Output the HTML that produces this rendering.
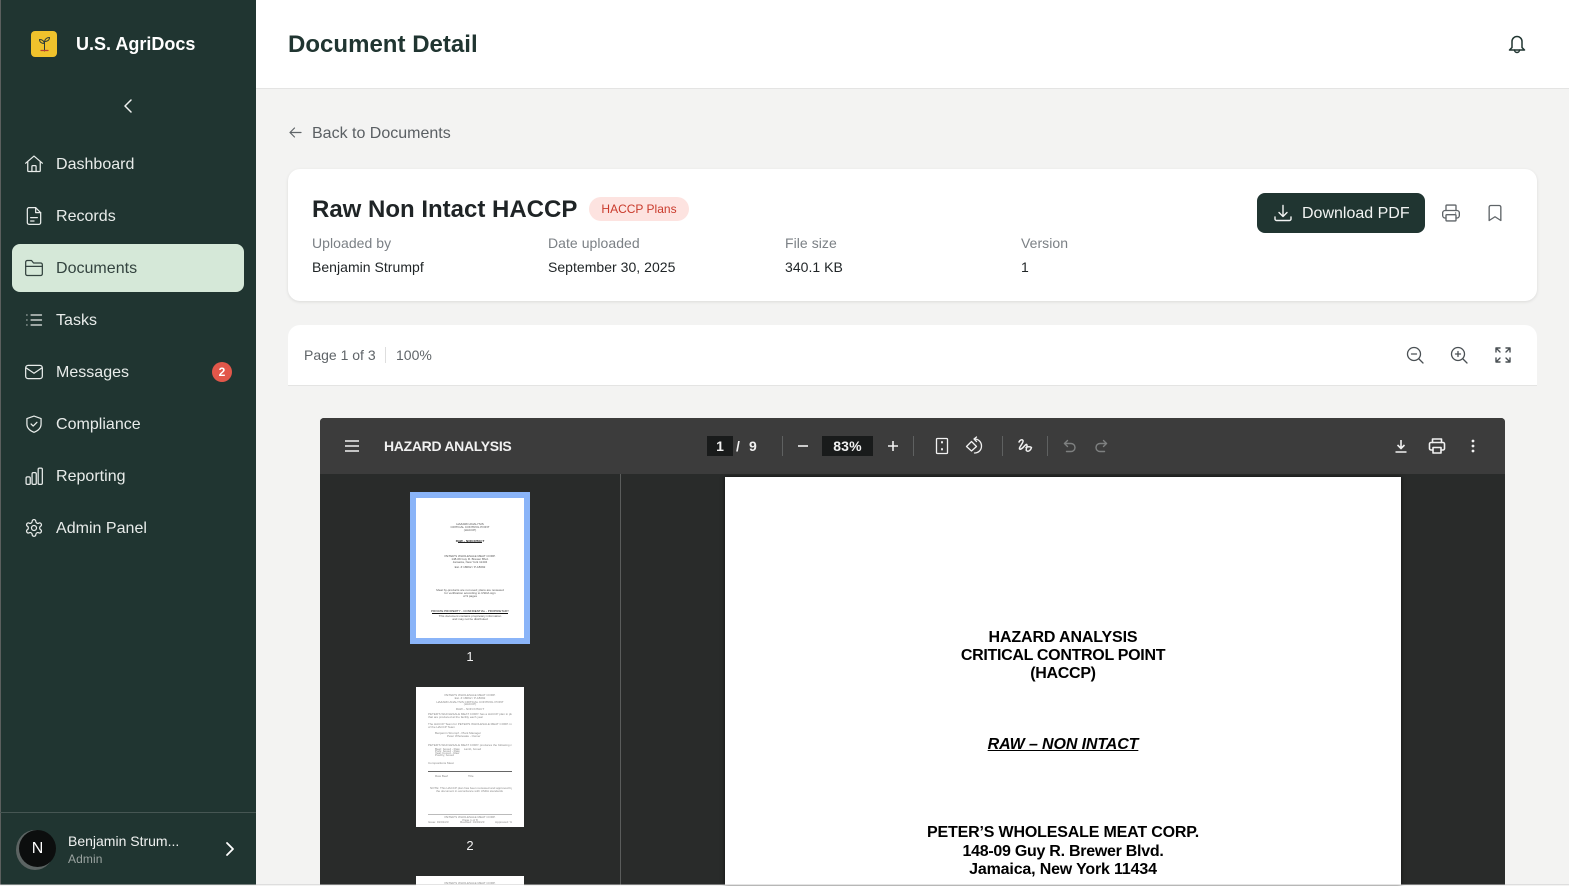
<!DOCTYPE html>
<html><head><meta charset="utf-8"><title>Document Detail</title>
<style>
*{box-sizing:border-box}
html,body{margin:0;padding:0;width:1569px;height:885px;overflow:hidden;background:#f3f3f2;font-family:"Liberation Sans",sans-serif}
.a{position:absolute;white-space:nowrap}
svg{position:absolute;fill:none;stroke-linecap:round;stroke-linejoin:round}
.nav{position:absolute;left:56px;font-size:16px;line-height:20px;color:#e8ecea;letter-spacing:.02px;white-space:nowrap}
.ic{stroke:#e8ecea;stroke-width:1.5}
.lab{font-size:14px;line-height:18px;color:#7b8085;letter-spacing:.05px}
.val{font-size:14px;line-height:18px;color:#1f2426;letter-spacing:.03px}
.pd{position:absolute;left:725px;width:676px;text-align:center;font-size:16px;line-height:18px;font-weight:bold;color:#000;white-space:nowrap}
.t{position:absolute;text-align:center;font-size:3px;line-height:3px;color:#555;white-space:nowrap;overflow:hidden}
.t2 .t{color:#8a8a8a}
.tb{stroke:#f1f1f1;stroke-width:1.6}
.sep{position:absolute;top:436px;width:1px;height:20px;background:#5f6161}
.w{position:absolute;left:0;width:0;height:0}
</style></head><body>

<div class="a" style="left:0;top:0;width:256px;height:885px;background:#203531"></div>
<div class="a" style="left:0;top:0;width:1px;height:885px;background:#5b5f5e"></div>
<div class="a" style="left:31px;top:31px;width:26px;height:26px;border-radius:4px;background:#f0c22c"></div>
<svg style="left:37px;top:35px" width="15" height="18" viewBox="0 0 15 18" stroke="#2a3a3a" stroke-width="1"><path d="M7.5 16V7"/><path d="M7.5 8.5C7 6 5.5 4.5 2.5 4.5 2.5 7 4.5 8.500 7.500 8.500z"/><path d="M7.500 6.500C8 4 10 2.500 12.500 2.500 12.500 5 10.500 6.500 7.500 6.500z"/><path d="M4 15.500h7" stroke="#b8402e" stroke-width="1.200"/></svg>
<div class="a" style="left:76px;top:33px;font-size:18px;line-height:22px;font-weight:bold;color:#fff">U.S. AgriDocs</div>
<svg style="left:118px;top:96px" width="20" height="20" viewBox="0 0 20 20" stroke="#f0f2f1" stroke-width="1.500"><path d="M13 4 7 10l6 6"/></svg>

<div class="a" style="left:12px;top:244px;width:232px;height:48px;border-radius:8px;background:#d5e8d8"></div>

<div class="nav" style="top:155px">Dashboard</div>
<div class="nav" style="top:207px">Records</div>
<div class="nav" style="top:259px;color:#33433f">Documents</div>
<div class="nav" style="top:311px">Tasks</div>
<div class="nav" style="top:363px">Messages</div>
<div class="nav" style="top:415px">Compliance</div>
<div class="nav" style="top:467px">Reporting</div>
<div class="nav" style="top:519px">Admin Panel</div>

<svg class="ic" style="left:24px;top:154px" width="20" height="20" viewBox="0 0 24 24"><path d="M2 11 12 2.500 22 11"/><path d="M4.500 9.500V20a1 1 0 0 0 1 1h13a1 1 0 0 0 1-1V9.500"/><path d="M9.500 21v-6a1 1 0 0 1 1-1h3a1 1 0 0 1 1 1v6"/></svg>
<svg class="ic" style="left:24px;top:206px" width="20" height="20" viewBox="0 0 24 24"><path d="M14 2H6a2 2 0 0 0-2 2v16a2 2 0 0 0 2 2h12a2 2 0 0 0 2-2V8z"/><path d="M14 2v6h6"/><path d="M8 14h8M8 18h4"/></svg>
<svg style="left:24px;top:258px;stroke:#33433f;stroke-width:1.500" width="20" height="20" viewBox="0 0 24 24"><path d="M2 7V5a2 2 0 0 1 2-2h5l2.500 3H20a2 2 0 0 1 2 2v11a2 2 0 0 1-2 2H4a2 2 0 0 1-2-2z"/><path d="M2 10h20"/></svg>
<svg class="ic" style="left:24px;top:310px" width="20" height="20" viewBox="0 0 24 24"><path d="M8.500 6H21M8.500 12H21M8.500 18H21M3.500 6h.01M3.500 12h.01M3.500 18h.01"/></svg>
<svg class="ic" style="left:24px;top:362px" width="20" height="20" viewBox="0 0 24 24"><rect x="2" y="4" width="20" height="16" rx="3"/><path d="m2.500 7 9.500 6.500L21.500 7"/></svg>
<svg class="ic" style="left:24px;top:414px" width="20" height="20" viewBox="0 0 24 24"><path d="M12 2.500 20.500 5.500V12c0 5-3.500 8-8.500 10-5-2-8.500-5-8.500-10V5.500z"/><path d="m8.500 12 2.500 2.500 4.500-4.500"/></svg>
<svg class="ic" style="left:24px;top:466px" width="20" height="20" viewBox="0 0 24 24"><rect x="2.500" y="13" width="5" height="9" rx="1.500"/><rect x="9.700" y="8" width="5" height="14" rx="1.500"/><rect x="17" y="2.500" width="5" height="19.500" rx="1.500"/></svg>
<svg class="ic" style="left:24px;top:518px" width="20" height="20" viewBox="0 0 24 24"><circle cx="12" cy="12" r="3"/><path d="M12.200 2h-.4a2 2 0 0 0-2 2v.2a2 2 0 0 1-1 1.700l-.4.300a2 2 0 0 1-2 0l-.2-.1a2 2 0 0 0-2.700.7l-.2.400a2 2 0 0 0 .7 2.700l.2.100a2 2 0 0 1 1 1.700v.5a2 2 0 0 1-1 1.700l-.2.100a2 2 0 0 0-.7 2.700l.2.400a2 2 0 0 0 2.700.7l.2-.1a2 2 0 0 1 2 0l.4.300a2 2 0 0 1 1 1.700v.2a2 2 0 0 0 2 2h.4a2 2 0 0 0 2-2v-.2a2 2 0 0 1 1-1.700l.4-.3a2 2 0 0 1 2 0l.2.100a2 2 0 0 0 2.700-.7l.2-.4a2 2 0 0 0-.7-2.700l-.2-.1a2 2 0 0 1-1-1.700v-.5a2 2 0 0 1 1-1.700l.2-.1a2 2 0 0 0 .7-2.700l-.2-.4a2 2 0 0 0-2.700-.7l-.2.100a2 2 0 0 1-2 0l-.4-.3a2 2 0 0 1-1-1.700V4a2 2 0 0 0-2-2z"/></svg>

<div class="a" style="left:212px;top:362px;width:20px;height:20px;border-radius:50%;background:#e2574a;color:#fff;font-size:12px;font-weight:bold;line-height:20px;text-align:center">2</div>

<div class="a" style="left:0;top:812px;width:256px;height:1px;background:#465653"></div>
<div class="a" style="left:16px;top:830px;width:38px;height:40px;border-radius:50%;background:#5c6463"></div>
<div class="a" style="left:19px;top:830px;width:37px;height:37px;border-radius:50%;background:#0c0e0e;color:#fff;font-size:16px;line-height:37px;text-align:center">N</div>
<div class="a" style="left:68px;top:832px;font-size:14px;line-height:18px;color:#f0f2f1">Benjamin Strum...</div>
<div class="a" style="left:68px;top:851px;font-size:12px;line-height:16px;color:#9aa3a0;letter-spacing:.1px">Admin</div>
<svg style="left:220px;top:839px" width="20" height="20" viewBox="0 0 20 20" stroke="#fff" stroke-width="1.800"><path d="m7 4 6 6-6 6"/></svg>

<div class="a" style="left:256px;top:0;width:1313px;height:89px;background:#fff;border-bottom:1px solid #e4e4e3"></div>
<div class="a" style="left:288px;top:30px;font-size:24px;line-height:30px;font-weight:bold;color:#203531;letter-spacing:.02px">Document Detail</div>
<svg style="left:1505px;top:32px" width="24" height="24" viewBox="0 0 24 24" stroke="#203531" stroke-width="1.500"><path d="M7 15.500V9.500a5 5 0 0 1 10 0V15.500l2.500 2.500H4.500z"/><path d="M9.500 18a2.500 2.500 0 0 0 5 0"/></svg>

<svg style="left:287px;top:124px" width="17" height="17" viewBox="0 0 17 17" stroke="#5f6468" stroke-width="1.200"><path d="M14 8.500H3M7.500 4 3 8.500 7.500 13"/></svg>
<div class="a" style="left:312px;top:124px;font-size:16px;line-height:20px;color:#5a5f63">Back to Documents</div>

<div class="a" style="left:288px;top:169px;width:1249px;height:132px;background:#fff;border-radius:12px;box-shadow:0 1px 3px rgba(0,0,0,.1)"></div>
<div class="a" style="left:312px;top:195px;font-size:24px;line-height:30px;font-weight:bold;color:#1f2426">Raw Non Intact HACCP</div>
<div class="a" style="left:589px;top:197px;width:100px;height:24px;border-radius:12px;background:#fde3e0;color:#c93a2b;font-size:12px;line-height:24px;text-align:center">HACCP Plans</div>

<div class="a lab" style="left:312px;top:234px">Uploaded by</div>
<div class="a lab" style="left:548px;top:234px">Date uploaded</div>
<div class="a lab" style="left:785px;top:234px">File size</div>
<div class="a lab" style="left:1021px;top:234px">Version</div>
<div class="a val" style="left:312px;top:258px">Benjamin Strumpf</div>
<div class="a val" style="left:548px;top:258px">September 30, 2025</div>
<div class="a val" style="left:785px;top:258px">340.1 KB</div>
<div class="a val" style="left:1021px;top:258px">1</div>

<div class="a" style="left:1257px;top:193px;width:168px;height:40px;border-radius:8px;background:#203531"></div>
<svg style="left:1273px;top:203px" width="20" height="20" viewBox="0 0 20 20" stroke="#f2f4f3" stroke-width="1.400"><path d="M10 2.500v10.500M6 9.500l4 4 4-4"/><path d="M2 14v2a1.500 1.500 0 0 0 1.500 1.500h13A1.500 1.500 0 0 0 18 16v-2"/></svg>
<div class="a" style="left:1302px;top:204px;font-size:16px;line-height:20px;color:#f2f4f3">Download PDF</div>
<svg style="left:1441px;top:203px" width="20" height="20" viewBox="0 0 24 24" stroke="#5f6468" stroke-width="1.600"><path d="M6 9V3.500a1 1 0 0 1 1-1h10a1 1 0 0 1 1 1V9"/><path d="M6 18H5a3 3 0 0 1-3-3v-3a3 3 0 0 1 3-3h14a3 3 0 0 1 3 3v3a3 3 0 0 1-3 3h-1"/><rect x="6" y="14" width="12" height="7.500" rx="1"/><path d="M17.500 12h.01"/></svg>
<svg style="left:1485px;top:203px" width="20" height="20" viewBox="0 0 24 24" stroke="#5f6468" stroke-width="1.600"><path d="M19 21l-7-4.500L5 21V5a2 2 0 0 1 2-2h10a2 2 0 0 1 2 2z"/></svg>

<div class="a" style="left:288px;top:325px;width:1249px;height:61px;background:#fff;border-radius:12px 12px 0 0;border-bottom:1px solid #e4e4e3"></div>
<div class="a" style="left:304px;top:346px;font-size:14px;line-height:18px;color:#5f6468">Page 1 of 3</div>
<div class="a" style="left:385px;top:347px;width:1px;height:16px;background:#dedede"></div>
<div class="a" style="left:396px;top:346px;font-size:14px;line-height:18px;color:#5f6468">100%</div>
<svg style="left:1405px;top:345px" width="20" height="20" viewBox="0 0 20 20" stroke="#4a5054" stroke-width="1.300"><circle cx="9" cy="9" r="6.500"/><path d="m14 14 4 4M6.500 9h5"/></svg>
<svg style="left:1449px;top:345px" width="20" height="20" viewBox="0 0 20 20" stroke="#4a5054" stroke-width="1.300"><circle cx="9" cy="9" r="6.500"/><path d="m14 14 4 4M6.500 9h5M9 6.500v5"/></svg>
<svg style="left:1493px;top:345px" width="20" height="20" viewBox="0 0 20 20" stroke="#4a5054" stroke-width="1.400"><path d="M3 7V3h4M13 3h4v4M17 13v4h-4M7 17H3v-4M3.500 3.500l3.500 3.500M16.500 3.500 13 7M16.500 16.500 13 13M3.500 16.500 7 13"/></svg>

<div class="a" style="left:320px;top:418px;width:1185px;height:467px;background:#292b2a;border-radius:4px 4px 0 0"></div>
<div class="a" style="left:320px;top:418px;width:1185px;height:56px;background:#3c3c3c;border-radius:4px 4px 0 0"></div>
<div class="a" style="left:620px;top:474px;width:1px;height:411px;background:#5a5c5b"></div>

<svg style="left:342px;top:436px" width="20" height="20" viewBox="0 0 20 20" stroke="#f1f1f1" stroke-width="1.400"><path d="M3 5h14M3 10h14M3 15h14" stroke-linecap="butt"/></svg>
<div class="a" style="left:384px;top:437px;font-size:14px;line-height:18px;font-weight:bold;color:#f1f1f1;letter-spacing:-.3px">HAZARD ANALYSIS</div>
<div class="a" style="left:707px;top:436px;width:26px;height:20px;background:#191b1b;color:#f1f1f1;font-size:14px;line-height:20px;text-align:center;font-weight:bold">1</div>
<div class="a" style="left:736px;top:437px;font-size:14px;line-height:18px;font-weight:bold;color:#f1f1f1;letter-spacing:.5px">/</div>
<div class="a" style="left:749px;top:437px;font-size:14px;line-height:18px;font-weight:bold;color:#f1f1f1">9</div>
<div class="sep" style="left:782px"></div>
<svg class="tb" style="left:794px;top:437px" width="18" height="18" viewBox="0 0 18 18"><path d="M4 9h10" stroke-linecap="butt"/></svg>
<div class="a" style="left:822px;top:436px;width:51px;height:20px;background:#191b1b;color:#f1f1f1;font-size:14px;line-height:20px;text-align:center;letter-spacing:.2px;font-weight:bold">83%</div>
<svg class="tb" style="left:884px;top:437px" width="18" height="18" viewBox="0 0 18 18"><path d="M4 9h10M9 4v10" stroke-linecap="butt"/></svg>
<div class="sep" style="left:913px"></div>
<svg style="left:933px;top:436px;stroke:#f1f1f1;stroke-width:1.300" width="18" height="20" viewBox="0 0 18 20"><rect x="3.500" y="2.500" width="11" height="15" rx="1"/><path d="M9 6v.5M9 13v.5" stroke-width="2"/></svg>
<svg style="left:964px;top:436px;stroke:#f1f1f1;stroke-width:1.300" width="20" height="20" viewBox="0 0 20 20"><path d="M7.500 5.500 2.500 10.500l5 4.500 5-4.500z"/><path d="M10.500 3c4 0 7 3 7 7s-3 7-7 7"/><path d="M12.500 1 10 3l2.500 2.500"/></svg>
<div class="sep" style="left:1002px"></div>
<svg style="left:1016px;top:437px;stroke:#f1f1f1;stroke-width:1.500" width="18" height="18" viewBox="0 0 18 18"><path d="M3 5c1-2 3-3 4-1.500S4 9 3.500 11 5.500 12.500 8 9.500 11 7 11 9s-2 4 0 5 4-1.500 4.500-3.500c-1-1-4-1-5.500 0"/></svg>
<div class="sep" style="left:1047px"></div>
<svg style="left:1061px;top:437px;stroke:#7e8080;stroke-width:1.400" width="18" height="18" viewBox="0 0 18 18"><path d="M6.500 3.500 3.500 6.500l3 3"/><path d="M3.500 6.500H10a4 4 0 0 1 0 8H5.500"/></svg>
<svg style="left:1092px;top:437px;stroke:#7e8080;stroke-width:1.400" width="18" height="18" viewBox="0 0 18 18"><path d="M11.500 3.500l3 3-3 3"/><path d="M14.500 6.500H8a4 4 0 0 0 0 8h4.500"/></svg>
<svg class="tb" style="left:1392px;top:437px" width="18" height="18" viewBox="0 0 18 18"><path d="M9 3v8M5.500 8 9 11.500 12.500 8M3.500 15h11" stroke-linecap="butt" stroke-linejoin="miter"/></svg>
<svg class="tb" style="left:1427px;top:436px" width="20" height="20" viewBox="0 0 20 20"><path d="M5.500 6.500V3h9v3.500"/><rect x="2.500" y="6.500" width="15" height="7.500" rx="1.500"/><rect x="6" y="11.500" width="8" height="5.500" fill="#3c3c3c"/></svg>
<svg style="left:1464px;top:437px;fill:#f1f1f1" width="18" height="18" viewBox="0 0 18 18"><circle cx="9" cy="4" r="1.400"/><circle cx="9" cy="9" r="1.400"/><circle cx="9" cy="14" r="1.400"/></svg>

<div class="w" style="top:1px">
<div class="a" style="left:410px;top:491px;width:120px;height:152px;background:#8ab4f8"></div>
<div class="a" style="left:416px;top:497px;width:108px;height:140px;background:#fff"></div>
<div class="t" style="left:416px;width:108px;top:522px">HAZARD ANALYSIS</div>
<div class="t" style="left:416px;width:108px;top:525px">CRITICAL CONTROL POINT</div>
<div class="t" style="left:416px;width:108px;top:528px">(HACCP)</div>
<div class="t" style="left:416px;width:108px;top:539px;color:#222;font-weight:bold">RAW – NON INTACT</div>
<div class="a" style="left:458px;top:541px;width:24px;height:1px;background:#222"></div>
<div class="t" style="left:416px;width:108px;top:554px">PETER'S WHOLESALE MEAT CORP.</div>
<div class="t" style="left:416px;width:108px;top:557px">148-09 Guy R. Brewer Blvd.</div>
<div class="t" style="left:416px;width:108px;top:560px">Jamaica, New York 11434</div>
<div class="t" style="left:416px;width:108px;top:565px">Est. # 18092 / P-18092</div>
<div class="t" style="left:416px;width:108px;top:588px">Meat by-products are not used; plans are reviewed</div>
<div class="t" style="left:416px;width:108px;top:591px">for verification according to USDA sign</div>
<div class="t" style="left:416px;width:108px;top:594px">of 9 pages</div>
<div class="t" style="left:416px;width:108px;top:609px;color:#222">PRIVATE PROPERTY - CONFIDENTIAL - PROPRIETARY</div>
<div class="a" style="left:432px;top:612px;width:76px;height:1px;background:#111"></div>
<div class="t" style="left:416px;width:108px;top:614px">This document contains proprietary information</div>
<div class="t" style="left:416px;width:108px;top:617px">and may not be distributed</div>
<div class="a" style="left:320px;top:647px;width:300px;text-align:center;font-size:13px;line-height:17px;color:#f1f1f1">1</div>

<div class="a" style="left:416px;top:686px;width:108px;height:140px;background:#fff"></div>
<div class="t2">
<div class="t" style="left:416px;width:108px;top:693px">PETER'S WHOLESALE MEAT CORP.</div>
<div class="t" style="left:416px;width:108px;top:696px">Est. # 18092 / P-18092</div>
<div class="t" style="left:416px;width:108px;top:700px">HAZARD ANALYSIS CRITICAL CONTROL POINT</div>
<div class="t" style="left:416px;width:108px;top:702px">(HACCP)</div>
<div class="t" style="left:416px;width:108px;top:707px">RAW – NON INTACT</div>
<div class="t" style="left:428px;width:84px;top:712px;text-align:left">PETER'S WHOLESALE MEAT CORP. has a HACCP plan in place to assure the safety of all raw products</div>
<div class="t" style="left:428px;width:84px;top:715px;text-align:left">that are produced at the facility each year</div>
<div class="t" style="left:428px;width:84px;top:722px;text-align:left">The HACCP Team for PETER'S WHOLESALE MEAT CORP. includes the following members</div>
<div class="t" style="left:428px;width:84px;top:725px;text-align:left">of the HACCP Team</div>
<div class="t" style="left:435px;width:60px;top:731px;text-align:left">Benjamin Strumpf - Plant Manager</div>
<div class="t" style="left:447px;width:60px;top:734px;text-align:left">Peter Wholesale - Owner</div>
<div class="t" style="left:428px;width:84px;top:743px;text-align:left">PETER'S WHOLESALE MEAT CORP. produces the following raw products</div>
<div class="t" style="left:435px;width:70px;top:747px;text-align:left">Beef, boxed - Raw &nbsp;&nbsp;&nbsp; Lamb, boxed</div>
<div class="t" style="left:435px;width:40px;top:749px;text-align:left">Pork, boxed - Raw</div>
<div class="t" style="left:435px;width:40px;top:751px;text-align:left">Veal, boxed - Raw</div>
<div class="t" style="left:435px;width:40px;top:753px;text-align:left">Poultry, boxed</div>
<div class="t" style="left:428px;width:40px;top:761px;text-align:left">Compositions Meat</div>
<div class="a" style="left:428px;top:770px;width:84px;height:1px;background:#666"></div>
<div class="t" style="left:435px;width:70px;top:774px;text-align:left">Raw Beef &nbsp;&nbsp;&nbsp;&nbsp;&nbsp;&nbsp;&nbsp;&nbsp;&nbsp;&nbsp;&nbsp;&nbsp;&nbsp;&nbsp;&nbsp;&nbsp;&nbsp;&nbsp;&nbsp;&nbsp;&nbsp;&nbsp; Title</div>
<div class="t" style="left:430px;width:82px;top:786px;text-align:left">NOTE: This HACCP plan has been reviewed and approved by the HACCP Team with signature on</div>
<div class="t" style="left:436px;width:70px;top:789px;text-align:left">the document in accordance with USDA standards</div>
<div class="a" style="left:428px;top:813px;width:84px;height:1px;background:#bbb"></div>
<div class="t" style="left:416px;width:108px;top:815px">PETER'S WHOLESALE MEAT CORP.</div>
<div class="t" style="left:416px;width:108px;top:818px">Page 1 of 8</div>
<div class="t" style="left:428px;width:84px;top:820px;text-align:left">Issue: 01/01/23 &nbsp;&nbsp;&nbsp;&nbsp;&nbsp;&nbsp;&nbsp;&nbsp;&nbsp;&nbsp;&nbsp;&nbsp; Revised: 01/01/23 &nbsp;&nbsp;&nbsp;&nbsp;&nbsp;&nbsp;&nbsp;&nbsp;&nbsp;&nbsp;&nbsp; Approved: Yes</div>
</div>
<div class="a" style="left:320px;top:836px;width:300px;text-align:center;font-size:13px;line-height:17px;color:#f1f1f1">2</div>

<div class="a" style="left:416px;top:875px;width:108px;height:10px;background:#fff"></div>
<div class="t" style="left:416px;width:108px;top:881px;color:#8a8a8a">PETER'S WHOLESALE MEAT CORP.</div>
</div>

<div class="a" style="left:725px;top:477px;width:676px;height:408px;background:#fff;box-shadow:0 0 4px rgba(0,0,0,.6)"></div>
<div class="pd" style="top:629px;letter-spacing:-.13px">HAZARD ANALYSIS</div>
<div class="pd" style="top:647px;letter-spacing:-.3px">CRITICAL CONTROL POINT</div>
<div class="pd" style="top:665px;letter-spacing:-.3px">(HACCP)</div>
<div class="pd" style="top:736px;font-style:italic;text-decoration:underline;letter-spacing:-.12px">RAW – NON INTACT</div>
<div class="pd" style="top:824px;letter-spacing:-.17px">PETER’S WHOLESALE MEAT CORP.</div>
<div class="pd" style="top:843px;letter-spacing:-.27px">148-09 Guy R. Brewer Blvd.</div>
<div class="pd" style="top:861px;letter-spacing:-.17px">Jamaica, New York 11434</div>

<div class="a" style="left:0;top:884px;width:1569px;height:1px;background:#c9c9c9;opacity:.5"></div>
</body></html>
